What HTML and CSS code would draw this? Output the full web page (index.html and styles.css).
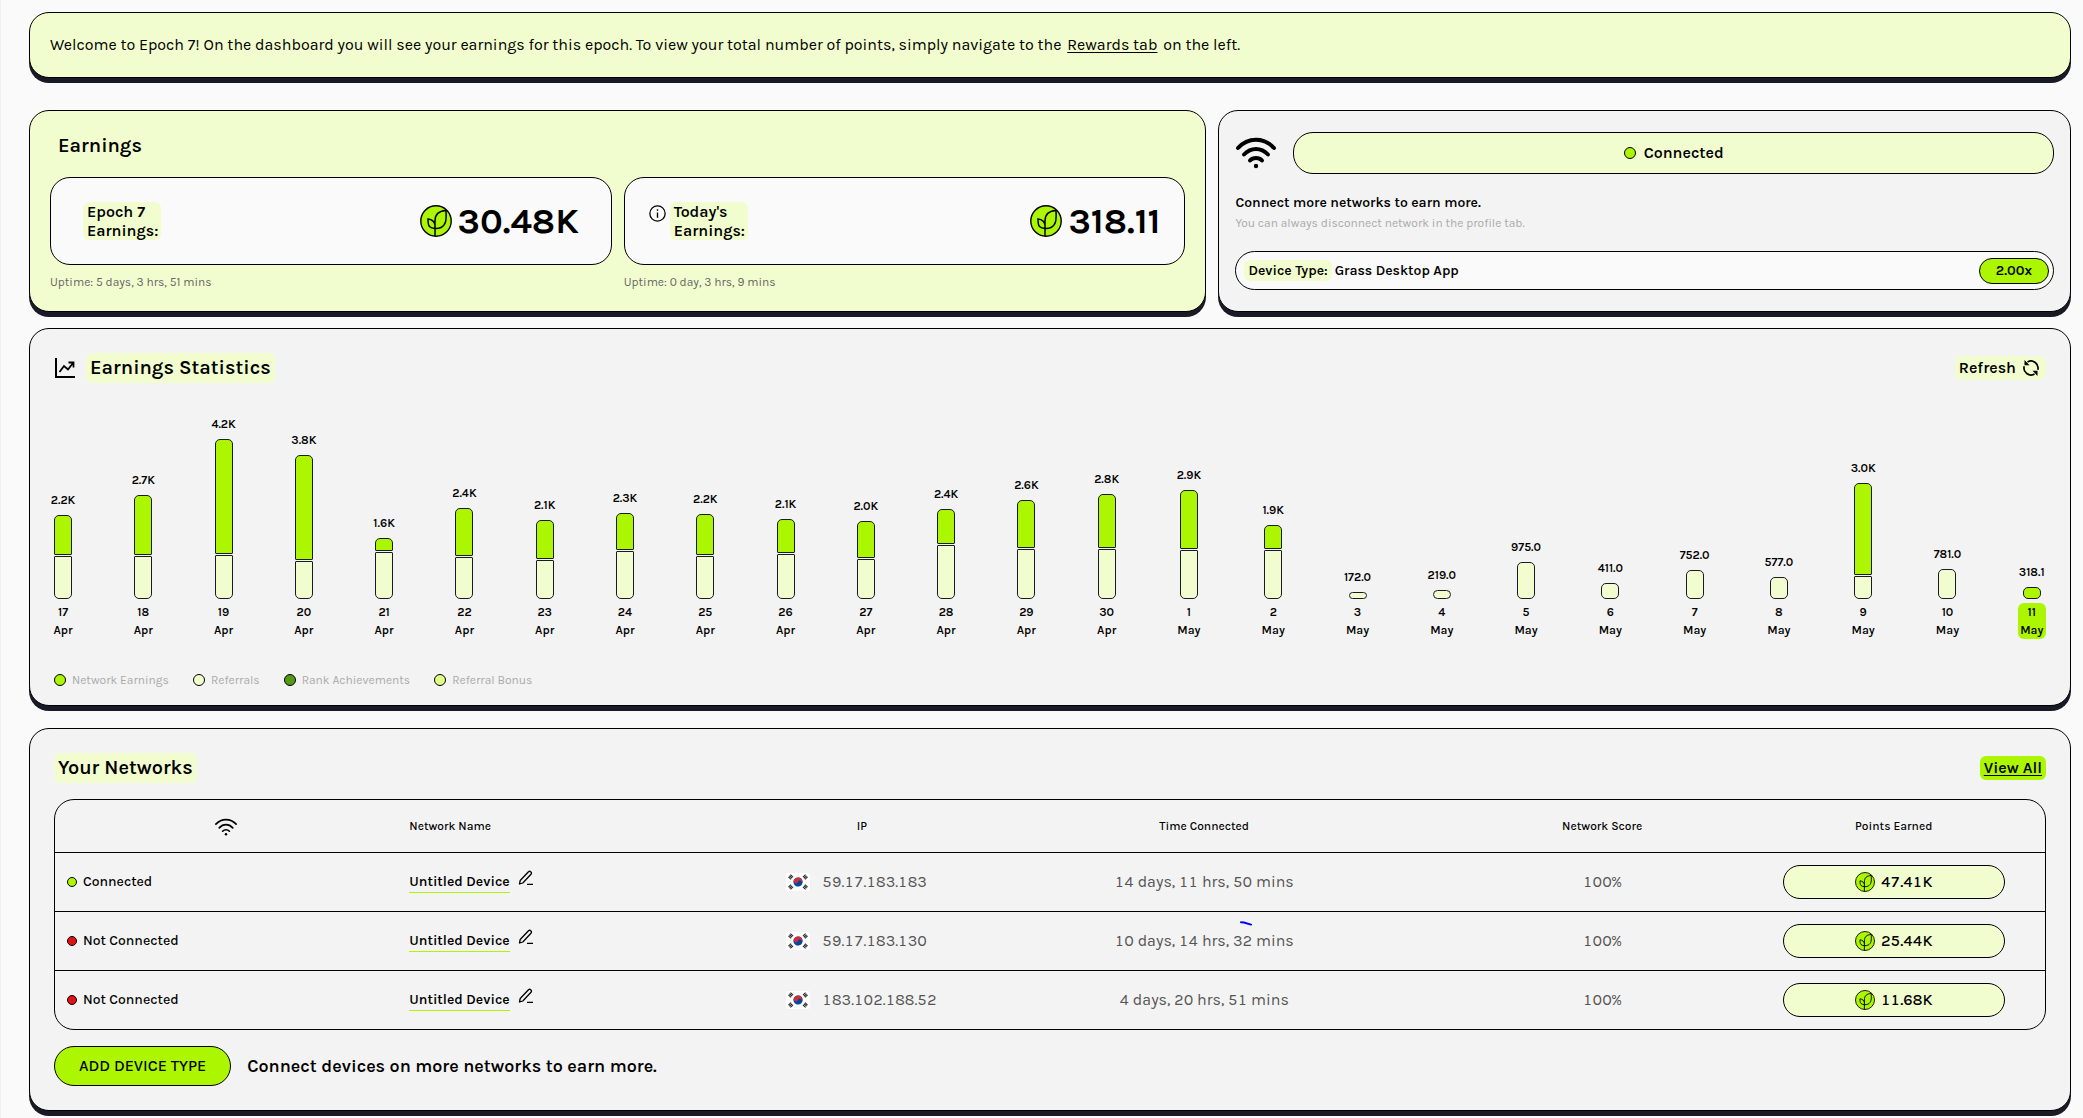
FILE: index.html
```html
<!DOCTYPE html>
<html lang="en">
<head>
<meta charset="utf-8">
<meta name="viewport" content="width=device-width, initial-scale=1">
<title>Dashboard</title>
<link rel="stylesheet" href="styles.css">
</head>
<body>
<svg class="sprite" aria-hidden="true">
  <symbol id="coin" viewBox="0 0 32 32">
    <circle cx="16" cy="16" r="15.2" fill="#abf600" stroke="#000" stroke-width="1.4"/>
    <path d="M15 31V16C15 9 19 6 26 5.600C26.500 15 26 20 21 22.500C18 24 12 24 9.500 21.500C8 20 8 17 8 14C12 14.500 14.500 17 15 20" fill="none" stroke="#000" stroke-width="1.500"/>
  </symbol>
  <symbol id="wifi" viewBox="0 0 40 32">
    <g fill="none" stroke="currentColor" stroke-linecap="round">
      <path d="M2 11C12 0 28 0 38 11"/><path d="M8 17.500C15 10 25 10 32 17.500"/><path d="M14 23.500C17 20 23 20 26 23.500"/>
    </g>
    <circle cx="20" cy="29" r="2.200" fill="currentColor"/>
  </symbol>
  <symbol id="pencil" viewBox="0 0 16 16">
    <path d="M1.500 14L2.200 10.500L10.500 1.700Q11.700 .8 12.900 1.900Q14 3 13 4.300L4.800 13L1.500 14ZM9 14.300H15" fill="none" stroke="#000" stroke-width="1.300" stroke-linejoin="round"/>
  </symbol>
  <symbol id="korea" viewBox="0 0 24 18">
    <rect width="24" height="18" rx="3" fill="#fff"/>
    <g transform="rotate(25 12 9)">
      <circle cx="12" cy="9" r="4.600" fill="#0047a0"/>
      <path d="M7.400 9A4.600 4.600 0 0 1 16.600 9A2.300 2.300 0 0 0 12 9A2.300 2.300 0 0 1 7.400 9Z" fill="#cd2e3a"/>
    </g>
    <g stroke="#222" stroke-width="3.600" stroke-dasharray="1.100 .4"><path d="M3.400 5.500L6.100 2.500M17.900 15.500L20.600 12.500M3.400 12.500L6.100 15.500M17.900 2.500L20.600 5.500"/></g>
  </symbol>
</svg>
<main class="page">
  <section class="card card-pale banner">
    <p>Welcome to Epoch 7! On the dashboard you will see your earnings for this epoch. To view your total number of points, simply navigate to the <a href="#rewards">Rewards tab</a> on the left.</p>
  </section>

  <div class="top">
    <section class="card card-pale earnings">
      <h2 class="title">Earnings</h2>
      <div class="totals">
        <div class="total">
          <div class="total-box">
            <h3 class="tag total-label">Epoch 7 Earnings:</h3>
            <span class="amount"><svg class="coin"><use href="#coin"/></svg>30.48K</span>
          </div>
          <p class="uptime">Uptime: 5 days, 3 hrs, 51 mins</p>
        </div>
        <div class="total">
          <div class="total-box">
            <svg class="info" viewBox="0 0 16 16"><circle cx="8" cy="8" r="7.200" fill="none" stroke="#000" stroke-width="1.200"/><path d="M8 7V12M8 4V5.500" stroke="#000" stroke-width="1.300"/></svg>
            <h3 class="tag total-label">Today's Earnings:</h3>
            <span class="amount"><svg class="coin"><use href="#coin"/></svg>318.11</span>
          </div>
          <p class="uptime">Uptime: 0 day, 3 hrs, 9 mins</p>
        </div>
      </div>
    </section>
    <section class="card connection">
      <div class="connection-row">
        <svg class="wifi-big"><use href="#wifi"/></svg>
        <div class="state"><i class="dot dot-lime"></i>Connected</div>
      </div>
      <p class="more">Connect more networks to earn more.</p>
      <p class="hint">You can always disconnect network in the profile tab.</p>
      <div class="device"><span class="tag">Device Type:</span><span>Grass Desktop App</span><span class="rate">2.00x</span></div>
    </section>
  </div>

  <section class="card stats">
    <header class="head">
      <svg class="chart-icon" viewBox="0 0 22 22"><path d="M2 1V20H21" fill="none" stroke="#000" stroke-width="2"/><path d="M5.500 15L10 9L14 12.500L19 6M14.500 5.500H19.500V10.500" fill="none" stroke="#000" stroke-width="1.800"/></svg>
      <h2 class="title tag">Earnings Statistics</h2>
      <button class="tag refresh" type="button">Refresh
        <svg class="refresh-icon" viewBox="0 0 18 18"><g fill="none" stroke="#000" stroke-width="1.700"><path d="M5.500 3A7 7 0 0 1 15.800 10.800"/><path d="M12.500 15A7 7 0 0 1 2.200 7.200"/></g><path d="M2.500 1V6.200H7.500ZM15.500 17V11.800H10.500Z"/></svg>
      </button>
    </header>
    <div class="chart" id="chart"></div>
    <ul class="legend">
      <li><i class="dot dot-lime"></i>Network Earnings</li>
      <li><i class="dot dot-pale"></i>Referrals</li>
      <li><i class="dot dot-green"></i>Rank Achievements</li>
      <li><i class="dot dot-yellow"></i>Referral Bonus</li>
    </ul>
  </section>

  <section class="card networks">
    <header class="head">
      <h2 class="title tag">Your Networks</h2>
      <a class="tag view-all" href="#networks">View All</a>
    </header>
    <div class="table-wrap">
    <table>
      <thead>
        <tr>
          <th class="c-state" aria-label="Status"><svg class="wifi-small"><use href="#wifi"/></svg></th>
          <th class="c-name">Network Name</th><th class="c-ip">IP</th><th class="c-time">Time Connected</th><th class="c-score">Network Score</th><th class="c-points">Points Earned</th>
        </tr>
      </thead>
      <tbody>
        <tr>
          <td class="c-state"><i class="dot dot-small dot-lime"></i>Connected</td>
          <td class="c-name"><span class="name">Untitled Device</span><button class="edit" type="button" aria-label="Edit name"><svg><use href="#pencil"/></svg></button></td>
          <td><span class="ip"><svg class="flag"><use href="#korea"/></svg>59.17.183.183</span></td>
          <td>14 days, 11 hrs, 50 mins</td><td>100%</td>
          <td><span class="points"><svg class="coin-small"><use href="#coin"/></svg>47.41K</span></td>
        </tr>
        <tr>
          <td class="c-state"><i class="dot dot-small dot-red"></i>Not Connected</td>
          <td class="c-name"><span class="name">Untitled Device</span><button class="edit" type="button" aria-label="Edit name"><svg><use href="#pencil"/></svg></button></td>
          <td><span class="ip"><svg class="flag"><use href="#korea"/></svg>59.17.183.130</span></td>
          <td><span class="marked">10 days, 14 hrs, 32 mins<svg class="mark" viewBox="0 0 12 5"><path d="M1 1.300L4 1.500L11 3.600" fill="none" stroke="#00f" stroke-width="2" stroke-linecap="round"/></svg></span></td><td>100%</td>
          <td><span class="points"><svg class="coin-small"><use href="#coin"/></svg>25.44K</span></td>
        </tr>
        <tr>
          <td class="c-state"><i class="dot dot-small dot-red"></i>Not Connected</td>
          <td class="c-name"><span class="name">Untitled Device</span><button class="edit" type="button" aria-label="Edit name"><svg><use href="#pencil"/></svg></button></td>
          <td><span class="ip"><svg class="flag"><use href="#korea"/></svg>183.102.188.52</span></td>
          <td>4 days, 20 hrs, 51 mins</td><td>100%</td>
          <td><span class="points"><svg class="coin-small"><use href="#coin"/></svg>11.68K</span></td>
        </tr>
      </tbody>
    </table>
    </div>
    <div class="add-row">
      <button class="add" type="button">ADD DEVICE TYPE</button>
      <p>Connect devices on more networks to earn more.</p>
    </div>
  </section>
</main>
<script src="chart.js"></script>
</body>
</html>
```

FILE: chart.js
```js
// [day, month, label, network earnings height, referrals height]
const days = [
  [17, 'Apr', '2.2K', 40, 43], [18, 'Apr', '2.7K', 60, 43], [19, 'Apr', '4.2K', 115, 44],
  [20, 'Apr', '3.8K', 105, 38], [21, 'Apr', '1.6K', 13, 47], [22, 'Apr', '2.4K', 48, 42],
  [23, 'Apr', '2.1K', 39, 39], [24, 'Apr', '2.3K', 37, 48], [25, 'Apr', '2.2K', 41, 43],
  [26, 'Apr', '2.1K', 34, 45], [27, 'Apr', '2.0K', 37, 40], [28, 'Apr', '2.4K', 35, 54],
  [29, 'Apr', '2.6K', 48, 50], [30, 'Apr', '2.8K', 54, 50], [1, 'May', '2.9K', 59, 49],
  [2, 'May', '1.9K', 24, 49], [3, 'May', '172.0', 0, 7], [4, 'May', '219.0', 0, 9],
  [5, 'May', '975.0', 0, 37], [6, 'May', '411.0', 0, 16], [7, 'May', '752.0', 0, 29],
  [8, 'May', '577.0', 0, 22], [9, 'May', '3.0K', 92, 23], [10, 'May', '781.0', 0, 30],
  [11, 'May', '318.1', 12, 0]
];
const segment = (kind, height) =>
  height ? `<div class="bar ${kind}" style="height:${height}px"></div>` : '';
document.getElementById('chart').innerHTML = days.map(([day, month, label, net, ref], i) => `
  <div class="day ${month === 'May' ? 'day-wide' : ''}">
    <span class="value">${label}</span>
    <div class="bars">${segment('bar-lime', net)}${segment('bar-pale', ref)}</div>
    <span class="date ${i === days.length - 1 ? 'today' : ''}">${day}<br>${month}</span>
  </div>`).join('');
```

FILE: styles.css
```css
* { box-sizing: border-box; }
body {
  margin: 0;
  min-height: 100vh;
  border-left: 1px solid #f0f0f0;
  background: #fafafa;
  color: #000;
  font: 400 16px/24px Karla, Inter, sans-serif;
}
h2, h3, p, ul { margin: 0; padding: 0; }
button { font: inherit; color: inherit; border: 0; background: none; padding: 0; cursor: pointer; }
a { color: inherit; text-underline-offset: 2px; }
.sprite { position: absolute; width: 0; height: 0; }
.page { padding: 12px 12px 8px 28px; }

.card {
  background: #f3f3f3;
  border: 1px solid #000;
  border-radius: 20px;
  box-shadow: 0 5px 0 #1a1a26;
}
.card-pale { background: #f2fdcf; }
.tag { background: #f2fdcf; border-radius: 6px; padding: 0 4px; }
.title { font-size: 20px; line-height: 30px; font-weight: 600; }
.dot { display: inline-block; width: 12px; height: 12px; border: 1px solid #000; border-radius: 50%; flex: none; }
.dot-lime { background: #abf600; }
.dot-pale { background: #f2fdcf; }
.dot-green { background: #549a17; }
.dot-yellow { background: #e2fb86; }
.dot-red { background: #e31212; }
.dot-small { width: 10px; height: 10px; }

.banner { padding: 20px; margin-bottom: 32px; }
.banner a { margin: 0 2px; }

.top { display: grid; grid-template-columns: 58fr 42fr; gap: 12px; margin-bottom: 16px; }
.earnings { padding: 20px 20px 19px; }
.earnings .title { padding-left: 8px; margin-bottom: 16px; }
.totals { display: grid; grid-template-columns: 1fr 1fr; gap: 12px; }
.total-box {
  display: flex; align-items: center; height: 88px;
  padding: 0 32px;
  border: 1px solid #000; border-radius: 20px; background: #fafafa;
}
.total + .total .total-box { padding: 0 24px; }
.total-label { width: 78px; font-size: 16px; line-height: 19px; font-weight: 600; }
.info { width: 17px; height: 17px; margin: 0 4px 16px 0; }
.amount { display: flex; align-items: center; gap: 6px; margin-left: auto; font-size: 36px; line-height: 40px; font-weight: 700; }
.coin { width: 32px; height: 32px; }
.uptime { margin-top: 7px; font-size: 12px; line-height: 20px; color: #666; }

.connection { padding: 21px 16px 20px; }
.connection-row { display: flex; align-items: center; gap: 16px; margin-bottom: 20px; }
.wifi-big { width: 42px; height: 32px; stroke-width: 4; }
.state {
  flex: 1; display: flex; align-items: center; justify-content: center; gap: 8px; height: 42px;
  border: 1px solid #000; border-radius: 20px; background: #f2fdcf; font-weight: 600;
}
.more { font-size: 14px; line-height: 18px; font-weight: 600; }
.hint { font-size: 12px; line-height: 22px; color: #aaa; margin-bottom: 17px; }
.device {
  display: flex; align-items: center; gap: 3px; height: 39px; padding: 0 4px 0 8px;
  border: 1px solid #000; border-radius: 20px; background: #fafafa;
  font-size: 14px; line-height: 21px; font-weight: 600;
}
.rate {
  margin-left: auto; width: 70px; height: 26px; line-height: 24px; text-align: center;
  border: 1px solid #000; border-radius: 13px; background: #abf600;
}

.head { display: flex; align-items: center; padding: 0 24px; }
.stats { padding: 24px 0 15px; margin-bottom: 22px; }
.chart-icon { width: 22px; height: 22px; margin-right: 10px; }
.refresh { display: flex; align-items: center; gap: 6px; margin-left: auto; padding-right: 6px; font-weight: 600; }
.refresh-icon { width: 18px; height: 18px; }
.chart { display: flex; justify-content: space-between; height: 256px; padding: 0 24px 0 21px; }
.day {
  display: flex; flex-direction: column; align-items: center; justify-content: flex-end;
  width: 24px; font-size: 12px; line-height: 18px; font-weight: 600; text-align: center;
}
.day-wide { width: 28px; }
.value { white-space: nowrap; margin-bottom: 6px; }
.bars { display: flex; flex-direction: column; gap: 1px; width: 18px; margin-bottom: 4px; }
.bar { border: 1px solid #1a1a26; border-radius: 1px; }
.bar:first-child { border-top-left-radius: 5px; border-top-right-radius: 5px; }
.bar:last-child { border-bottom-left-radius: 5px; border-bottom-right-radius: 5px; }
.bar-lime { background: #abf600; }
.bar-pale { background: #f2fdcf; }
.date { width: 100%; border-radius: 6px; }
.today { background: #abf600; }
.legend { display: flex; gap: 24px; margin-top: 31px; padding: 0 24px; list-style: none; font-size: 12px; line-height: 20px; color: #aaa; }
.legend li { display: flex; align-items: center; gap: 6px; }

.networks { padding: 24px 0; }
.view-all { margin-left: auto; background: #abf600; font-weight: 600; }
.table-wrap { margin: 16px 24px; border: 1px solid #000; border-radius: 20px; }
table { width: 100%; table-layout: fixed; border-collapse: collapse; color: #555; font-variant-numeric: lining-nums tabular-nums; }
th, td { padding: 0; text-align: center; }
th { height: 52px; font-size: 12px; font-weight: 500; color: #000; }
td { height: 59px; border-top: 1px solid #000; }
th.c-state { width: 17.2%; }
th.c-name { width: 19.1%; }
th.c-ip { width: 8.5%; }
th.c-time { width: 25.9%; }
th.c-score { width: 14.1%; }
.c-name { text-align: left; padding-left: 12px; }
td.c-state { text-align: left; padding-left: 12px; font-size: 14px; color: #000; font-weight: 500; }
td.c-state .dot { margin-right: 6px; vertical-align: -1px; }
.wifi-small { width: 24px; height: 18px; stroke-width: 3; vertical-align: middle; }
td.c-name { color: #000; font-size: 14px; font-weight: 600; }
.name { display: inline-block; line-height: 21px; border-bottom: 1px solid #abf600; }
.edit { margin-left: 8px; }
.edit svg { width: 16px; height: 16px; display: block; }
.ip { display: flex; align-items: center; gap: 12px; padding-left: 9px; white-space: nowrap; }
.flag { width: 24px; height: 18px; flex: none; }
.points {
  display: inline-flex; align-items: center; justify-content: center; gap: 6px;
  width: 222px; height: 34px; vertical-align: middle;
  border: 1px solid #000; border-radius: 17px; background: #f2fdcf; color: #000; font-weight: 500;
}
.coin-small { width: 20px; height: 20px; }
.marked { position: relative; }
.mark { position: absolute; right: 42px; top: -10px; width: 12px; height: 5px; }
.add-row { display: flex; align-items: center; gap: 16px; padding: 0 24px; font-size: 18px; font-weight: 600; }
.add { height: 40px; padding: 0 24px; border: 1px solid #000; border-radius: 20px; background: #abf600; font-size: 16px; font-weight: 500; }
```
